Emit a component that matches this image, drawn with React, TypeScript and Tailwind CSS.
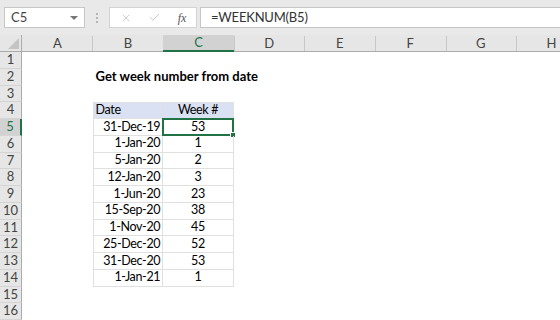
import { X, Check } from 'lucide-react'

const COLS = ['A', 'B', 'C', 'D', 'E', 'F', 'G', 'H']
const ROWS = 16

const DATA: Record<number, [string, string]> = {
  5: ['31-Dec-19', '53'],
  6: ['1-Jan-20', '1'],
  7: ['5-Jan-20', '2'],
  8: ['12-Jan-20', '3'],
  9: ['1-Jun-20', '23'],
  10: ['15-Sep-20', '38'],
  11: ['1-Nov-20', '45'],
  12: ['25-Dec-20', '52'],
  13: ['31-Dec-20', '53'],
  14: ['1-Jan-21', '1'],
}

const font = "font-['Lato','Liberation_Sans',sans-serif]"
const cellText = 'text-[12.5px] tracking-[-0.35px] text-black'

function FormulaBar() {
  return (
    <div className="h-[35px] bg-[#e9e9e9] flex items-start pt-[7px] shrink-0">
      {/* name box */}
      <div className="ml-[4px] w-[81px] h-[21px] bg-white border border-[#c6c6c6] flex items-center justify-between pl-[6px] pr-[6px]">
        <span className="text-[13px] text-[#444]">C5</span>
        <span className="w-0 h-0 border-l-[4px] border-r-[4px] border-t-[4px] border-l-transparent border-r-transparent border-t-[#777]" />
      </div>
      {/* grip */}
      <div className="w-[24px] h-[21px] flex flex-col items-center justify-center gap-[2px]">
        <span className="w-[2px] h-[2px] bg-[#b5b5b5]" />
        <span className="w-[2px] h-[2px] bg-[#b5b5b5]" />
        <span className="w-[2px] h-[2px] bg-[#b5b5b5]" />
      </div>
      {/* buttons */}
      <div className="w-[88px] h-[21px] bg-white border border-[#d4d4d4] flex items-center">
        <div className="w-[28px] ml-[2px] flex justify-center">
          <X size={12} strokeWidth={1.5} color="#bdbdbd" />
        </div>
        <div className="w-[28px] flex justify-center">
          <Check size={13} strokeWidth={1.5} color="#bdbdbd" />
        </div>
        <div className="w-[28px] flex justify-center">
          <span className="text-[12px] italic text-[#555] font-['Liberation_Serif',serif]">fx</span>
        </div>
      </div>
      {/* formula input */}
      <div className="ml-[3px] flex-1 h-[21px] bg-white border border-r-0 border-[#c6c6c6] flex items-center pl-[10px]">
        <span className="text-[13px] tracking-[-0.2px] text-[#333]">=WEEKNUM(B5)</span>
      </div>
    </div>
  )
}

function ColumnHeader() {
  return (
    <div className="flex h-[17px] bg-[#e6e6e6] border-b border-[#ababab]">
      <div className="w-[22px] shrink-0 relative border-r border-[#ababab]">
        <span
          className="absolute right-[2px] bottom-[2px] w-0 h-0"
          style={{ borderBottom: '11px solid #c4c4c4', borderLeft: '11px solid transparent' }}
        />
      </div>
      {COLS.map(c => {
        const sel = c === 'C'
        return (
          <div
            key={c}
            className={
              sel
                ? 'w-[70.6px] shrink-0 flex items-center justify-center pt-px bg-[#d2d2d2] border-b-2 border-[#217346] -mb-px text-[#217346] text-[13px]'
                : 'w-[70.6px] shrink-0 flex items-center justify-center pt-px relative text-[#444] text-[13px]'
            }
          >
            {c}
            {!sel && c !== 'B' && c !== 'A' && <span className="absolute left-0 top-[1px] bottom-0 w-px bg-[#c8c8c8]" />}
            {c === 'A' && <span className="absolute right-0 top-[1px] bottom-0 w-px bg-[#c8c8c8]" />}
          </div>
        )
      })}
    </div>
  )
}

function Row({ n }: { n: number }) {
  const sel = n === 5
  const inTable = n >= 4 && n <= 14
  const d = DATA[n]

  let bCls = `w-[70.6px] shrink-0 flex items-center ${cellText}`
  if (inTable) bCls += ' border-l border-r border-b border-[#e0e0e0]'
  if (n === 4) bCls += ' border-t bg-[#d9e1f2] pl-[2px]'
  else if (n === 2) bCls += ' pl-[3px] font-bold text-[13px] tracking-[0px] whitespace-nowrap overflow-visible'
  else bCls += ' justify-end pr-[2px]'

  let cCls = `w-[70.6px] shrink-0 flex items-center justify-center relative ${cellText}`
  if (inTable) cCls += ' border-r border-b border-[#e0e0e0]'
  if (n === 4) cCls += ' border-t bg-[#d9e1f2]'

  return (
    <div className="flex h-[16.75px]">
      <div
        className={
          sel
            ? 'w-[22px] shrink-0 flex items-center justify-center bg-[#d2d2d2] border-r-2 border-[#217346] border-b border-b-[#d4d4d4] text-[#217346] text-[13px]'
            : 'w-[22px] shrink-0 flex items-center justify-center bg-[#e6e6e6] border-r border-[#ababab] border-b border-b-[#d4d4d4] text-[#444] text-[13px]'
        }
      >
        {n}
      </div>
      <div className="w-[70.6px] shrink-0" />
      {/* B */}
      <div className={bCls}>
        {n === 2 && 'Get week number from date'}
        {n === 4 && 'Date'}
        {d && d[0]}
      </div>
      {/* C */}
      <div className={cCls}>
        {n === 4 && 'Week #'}
        {d && d[1]}
        {sel && (
          <div className="absolute -left-px -top-px -right-px -bottom-px border-2 border-[#217346]">
            <span className="absolute -right-[4px] -bottom-[4px] w-[6px] h-[6px] bg-[#217346] border border-white" />
          </div>
        )}
      </div>
    </div>
  )
}

export default function App() {
  return (
    <div className={`w-[560px] h-[320px] overflow-hidden bg-white flex flex-col ${font}`}>
      <FormulaBar />
      <ColumnHeader />
      <div className="flex flex-col">
        {Array.from({ length: ROWS }, (_, i) => (
          <Row key={i} n={i + 1} />
        ))}
      </div>
    </div>
  )
}
